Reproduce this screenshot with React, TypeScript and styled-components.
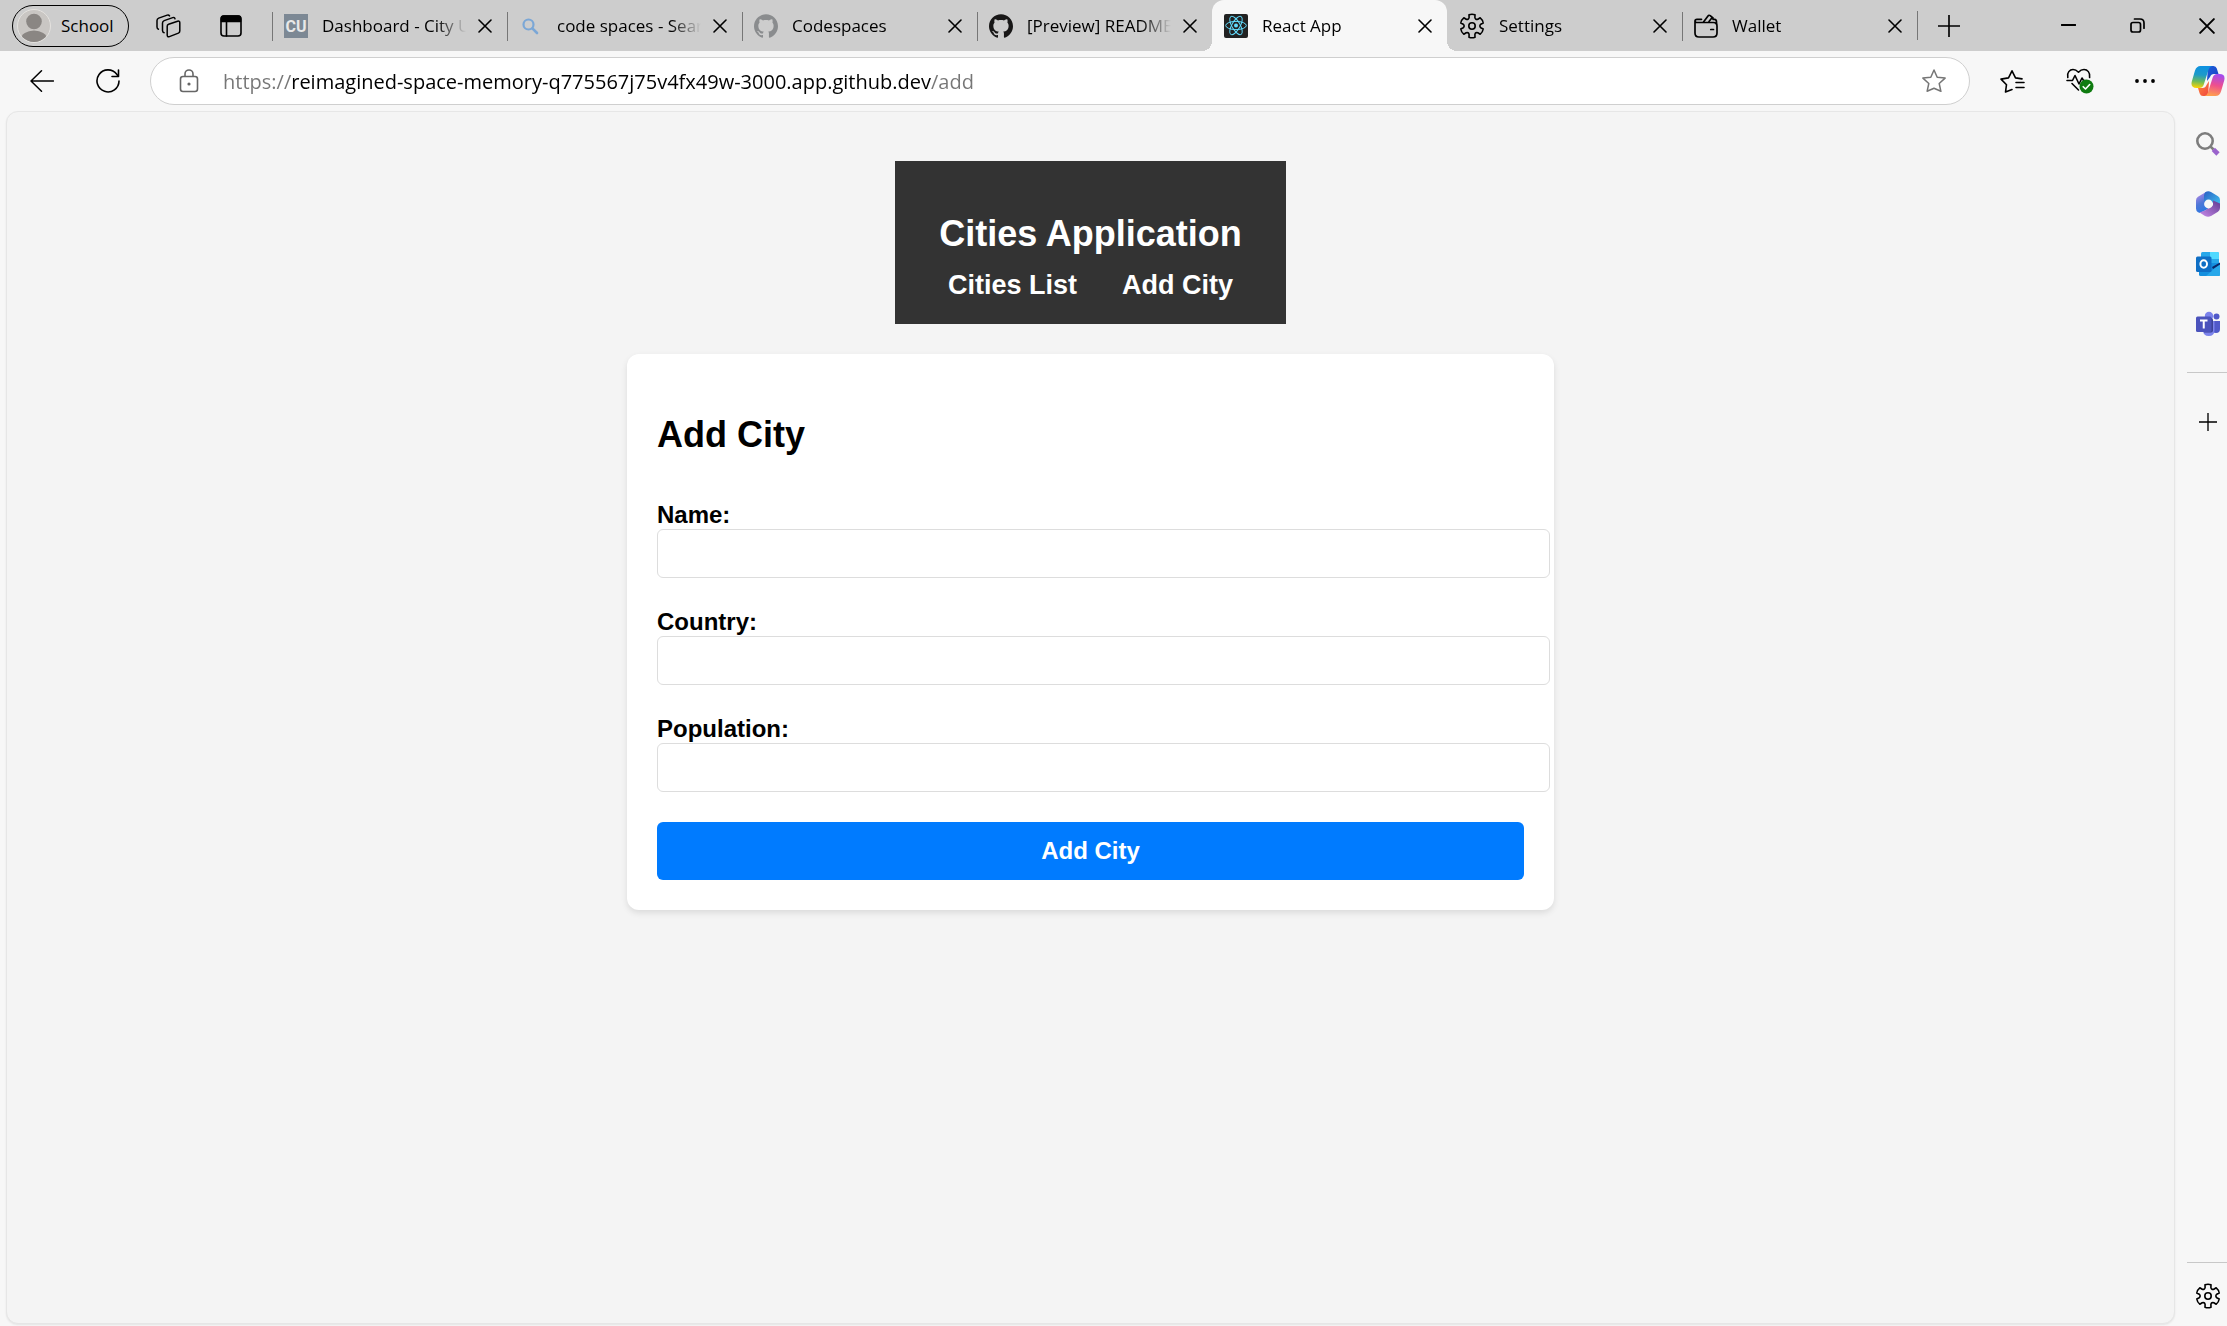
import React from "react";
import styled, { createGlobalStyle, css } from "styled-components";
import { SiGithub } from "react-icons/si";

const UI_FONT = `"Segoe UI", "Open Sans", "Noto Sans", sans-serif`;
const PAGE_FONT = `Arial, "Liberation Sans", sans-serif`;

const GlobalStyle = createGlobalStyle`
  *, *::before, *::after { box-sizing: border-box; }
  body { margin: 0; background: #f7f7f7; }
  button { font: inherit; color: inherit; background: none; border: 0; padding: 0; cursor: pointer; }
  svg { display: block; flex: none; }
`;

/* ---------- browser frame ---------- */

const Window = styled.div`
  display: flex;
  flex-direction: column;
  min-height: 100vh;
  color: #000;
  font-family: ${UI_FONT};
`;

const TabBar = styled.header`
  display: flex;
  align-items: center;
  height: 51px;
  padding-left: 12px;
  background: #cdcdcd;
  font-size: 17px;
`;

const ProfileButton = styled.button`
  display: flex;
  align-items: center;
  gap: 10px;
  width: 117px;
  height: 42px;
  padding-left: 4px;
  border: 1px solid #000;
  border-radius: 21px;
`;

const BarTools = styled.div`
  display: flex;
  align-items: center;
  gap: 39px;
  flex: none;
  width: 143px;
  padding-left: 27px;
`;

const IconButton = styled.button`
  display: flex;
  align-items: center;
  justify-content: center;
  flex: none;
`;

const TabList = styled.nav`
  display: flex;
  flex: 0 1 1645px;
  min-width: 0;
  height: 51px;
`;

const TabItem = styled.div<{ $active?: boolean; $divider?: boolean }>`
  position: relative;
  display: flex;
  align-items: center;
  flex: 1 1 0;
  min-width: 0;
  padding: 0 15px 0 12px;

  ${(p) =>
    p.$divider &&
    css`
      &::before {
        content: "";
        position: absolute;
        left: 0;
        top: 12px;
        width: 1px;
        height: 29px;
        background: #767676;
      }
    `}

  ${(p) =>
    p.$active &&
    css`
      background: #f7f7f7;
      border-radius: 12px 12px 0 0;
      &::before,
      &::after {
        content: "";
        position: absolute;
        bottom: 0;
        width: 10px;
        height: 10px;
      }
      &::before {
        left: -10px;
        background: radial-gradient(circle at 0 0, #cdcdcd 10px, #f7f7f7 10px);
      }
      &::after {
        right: -10px;
        background: radial-gradient(circle at 100% 0, #cdcdcd 10px, #f7f7f7 10px);
      }
    `}
`;

const TabButton = styled.button`
  display: flex;
  align-items: center;
  gap: 14px;
  flex: 1;
  min-width: 0;
  text-align: left;
`;

const TabTitle = styled.span`
  flex: 1;
  min-width: 0;
  overflow: hidden;
  white-space: nowrap;
  line-height: 26px;
  mask-image: linear-gradient(to right, #000 calc(100% - 30px), transparent);
`;

const TabClose = styled(IconButton)`
  margin-left: 12px;
`;

const TabBarDivider = styled.span`
  width: 1px;
  height: 29px;
  background: #767676;
`;

const NewTabButton = styled(IconButton)`
  margin-left: 20px;
`;

const WindowControls = styled.div`
  display: flex;
  justify-content: flex-end;
  gap: 54px;
  flex: 1;
  padding-right: 12px;
`;

const Toolbar = styled.div`
  display: flex;
  align-items: center;
  height: 60px;
  padding: 0 2px 0 30px;
`;

const NavButtons = styled.div`
  display: flex;
  gap: 42px;
  flex: none;
  width: 120px;
`;

const AddressBar = styled.div`
  display: flex;
  align-items: center;
  flex: 1;
  min-width: 0;
  height: 48px;
  padding: 0 23px 0 26px;
  background: #fff;
  border: 1px solid #cfcfcf;
  border-radius: 24px;
`;

const AddressLabel = styled.label`
  display: flex;
  align-items: center;
  gap: 22px;
  flex: 1;
  min-width: 0;
`;

/* Scheme and path are dimmed, the host keeps the full text colour. */
const AddressInput = styled.input`
  flex: 1;
  min-width: 0;
  height: 32px;
  padding: 1px 0 0;
  border: 0;
  outline: 0;
  font-family: ${UI_FONT};
  font-size: 20px;
  line-height: 30px;
  color: transparent;
  background: linear-gradient(to right, #767676 68px, #000 68px, #000 708px, #767676 708px);
  background-clip: text;
  -webkit-background-clip: text;
`;

const ToolbarActions = styled.div`
  display: flex;
  align-items: center;
  justify-content: space-between;
  flex: none;
  width: 155px;
  margin: 0 36px 0 30px;
`;

const Main = styled.div`
  display: flex;
  flex: 1;
  gap: 12px;
  padding: 0 0 2px 6px;
`;

const Sidebar = styled.aside`
  display: flex;
  flex-direction: column;
  align-items: center;
  flex: none;
  width: 40px;
  padding: 19px 0 14px;
`;

const SideApps = styled.div`
  display: flex;
  flex-direction: column;
  align-items: center;
  gap: 32px;
  width: 40px;
  padding-bottom: 34px;
`;

const SideButton = styled(IconButton)`
  width: 30px;
  height: 28px;
  padding-left: 2px;
`;

const SideRule = styled.hr`
  width: 40px;
  margin: 0;
  border: 0;
  border-top: 1px solid #c8c8c8;
`;

const SideAdd = styled(SideButton)`
  margin-top: 35px;
`;

const SideFooter = styled.div`
  display: flex;
  flex-direction: column;
  align-items: center;
  gap: 19px;
  margin-top: auto;
`;

/* ---------- web page ---------- */

const Page = styled.main`
  display: flex;
  flex-direction: column;
  align-items: center;
  gap: 30px;
  flex: 1;
  min-width: 0;
  padding: 49px 20px 30px;
  background: #f4f4f4;
  border: 1px solid #e6e6e6;
  border-radius: 12px;
  box-shadow: 0 1px 2px rgba(0, 0, 0, 0.08);
  font-family: ${PAGE_FONT};
  font-weight: bold;
`;

const SiteHeader = styled.header`
  padding: 52px 44px 23px;
  background: #333;
  color: #fff;
  text-align: center;
`;

const SiteTitle = styled.h1`
  margin: 0 0 15px;
  font-size: 36px;
  line-height: 42px;
`;

const SiteNav = styled.nav`
  display: flex;
  justify-content: center;
  gap: 45px;
`;

const SiteLink = styled.a`
  color: #fff;
  font-size: 27px;
  line-height: 31px;
  text-decoration: none;
`;

const CityForm = styled.form`
  width: 100%;
  max-width: 927px;
  padding: 60px 30px 30px;
  background: #fff;
  border-radius: 12px;
  box-shadow: 0 3px 6px rgba(0, 0, 0, 0.1);
`;

const FormTitle = styled.h2`
  margin: 0 0 45px;
  font-size: 36px;
  line-height: 42px;
`;

const Field = styled.div`
  margin-bottom: 30px;
`;

const FieldLabel = styled.label`
  display: block;
  font-size: 24px;
  line-height: 28px;
`;

const FieldInput = styled.input`
  display: block;
  width: calc(100% + 26px);
  height: 49px;
  padding: 0 12px;
  border: 1px solid #ddd;
  border-radius: 6px;
  font-family: ${PAGE_FONT};
  font-size: 20px;
  background: #fff;
`;

const SubmitButton = styled.button`
  && {
    display: block;
    width: 100%;
    height: 58px;
    border-radius: 6px;
    background: #007bff;
    color: #fff;
    font-size: 24px;
    line-height: 28px;
  }
`;

/* ---------- icons ---------- */

const line = {
  fill: "none",
  stroke: "currentColor",
  strokeLinecap: "round" as const,
  strokeLinejoin: "round" as const,
};

function polar(angle: number, radius: number) {
  const a = (angle * Math.PI) / 180;
  return `${(13 + radius * Math.cos(a)).toFixed(2)} ${(13 + radius * Math.sin(a)).toFixed(2)}`;
}

const gearPath =
  [0, 1, 2, 3, 4, 5]
    .map((i) => {
      const a = -90 + i * 60;
      return [
        `${i ? "L" : "M"}${polar(a - 19, 8.9)}`,
        `L${polar(a - 15, 11.6)}`,
        `Q${polar(a, 12.4)} ${polar(a + 15, 11.6)}`,
        `L${polar(a + 19, 8.9)}`,
        `Q${polar(a + 30, 7)} ${polar(a + 41, 8.9)}`,
      ].join("");
    })
    .join("") + "Z";

const Gear = () => (
  <svg width="26" height="26" viewBox="0 0 26 26" {...line} strokeWidth="1.6">
    <path d={gearPath} />
    <circle cx="13" cy="13" r="3.2" />
  </svg>
);

const Avatar = () => (
  <svg width="34" height="34" viewBox="0 0 34 34">
    <defs>
      <clipPath id="avatar">
        <circle cx="17" cy="17" r="16" />
      </clipPath>
    </defs>
    <circle cx="17" cy="17" r="16.5" fill="#c9c6c3" stroke="#e4e2df" />
    <g clipPath="url(#avatar)" fill="#8a8683">
      <circle cx="17" cy="12.5" r="7.8" />
      <ellipse cx="17" cy="30" rx="13" ry="8.6" />
    </g>
  </svg>
);

const Workspaces = () => (
  <svg width="25" height="24" viewBox="0 0 25 24" {...line} strokeWidth="1.5">
    <path d="M11.2 12.2q0-1.5 1.4-2l9-3q2.2-.5 2.2 1.6v8.2q0 1.5-1.4 2.1l-9 3.5q-2.2.7-2.2-1.5z" />
    <path d="M19 4.8q-.3-1.8-2.3-1.2l-8.5 3Q6.5 7.3 6.5 9v7.5q0 1.9 1.6 2.2" />
    <path d="M13.5 1.9q-.7-1.3-2.3-.8l-8.5 3Q1 4.8 1 6.5V13q0 1.6 1.4 2.2" />
  </svg>
);

const TabActions = () => (
  <svg width="22" height="22" viewBox="0 0 22 22" {...line} strokeWidth="1.6">
    <rect x="1" y="1" width="20" height="20" rx="3" />
    <path d="M1.5 3q0-2 2-2h15q2 0 2 2v3.5h-19z" fill="currentColor" />
    <path d="M6.5 7v14" />
  </svg>
);

const Cross = ({ size = 14, weight = 1.6 }: { size?: number; weight?: number }) => (
  <svg width={size} height={size} viewBox="0 0 14 14" {...line} strokeWidth={weight}>
    <path d="M1 1l12 12M13 1L1 13" />
  </svg>
);

const Plus = ({ size }: { size: number }) => (
  <svg width={size} height={size} viewBox="0 0 20 20" {...line} strokeWidth="1.5">
    <path d="M10 0v20M0 10h20" />
  </svg>
);

const Minimise = () => (
  <svg width="15" height="15" viewBox="0 0 15 15" {...line} strokeWidth="1.8">
    <path d="M.5 7h14" />
  </svg>
);

const Restore = () => (
  <svg width="15" height="15" viewBox="0 0 15 15" {...line} strokeWidth="1.7">
    <rect x="1" y="4.5" width="9.5" height="9.5" rx="2" />
    <path d="M4.5 1H10q4 0 4 4v5.2" />
  </svg>
);

const CuFavicon = () => (
  <svg width="24" height="24" viewBox="0 0 24 24">
    <rect width="24" height="24" fill="#7c8894" />
    <text x="12" y="18" textAnchor="middle" fill="#e8e8e8" fontFamily="Roboto, sans-serif" fontWeight="700" fontSize="16">
      CU
    </text>
  </svg>
);

const SearchFavicon = () => (
  <svg width="24" height="24" viewBox="0 0 24 24" fill="none" stroke="#7ba7d6" strokeWidth="2.2" strokeLinecap="round">
    <circle cx="9.5" cy="10.5" r="5" />
    <path d="M13.4 14.4l4.6 4.6" strokeWidth="2.6" />
  </svg>
);

const ReactFavicon = () => (
  <svg width="24" height="24" viewBox="0 0 24 24">
    <rect width="24" height="24" rx="2" fill="#222" />
    <g fill="none" stroke="#61dafb" strokeWidth="1">
      {[0, 60, 120].map((r) => (
        <ellipse key={r} cx="12" cy="11.5" rx="10.3" ry="4.1" transform={`rotate(${r} 12 11.5)`} />
      ))}
    </g>
    <circle cx="12" cy="11.5" r="2" fill="#61dafb" />
  </svg>
);

const Wallet = () => (
  <svg width="24" height="24" viewBox="0 0 24 24" {...line} strokeWidth="1.7">
    <path d="M7.5 5.3H3Q1 5.3 1 7v12q0 4 4 4h14q4 0 4-4v-7q0-3.5-3.5-3.5H3Q1 8.5 1 7" />
    <path d="M9.5 8L14 2q1-1.3 2.2-.3L19 4M15 7.5l3-3.7M19 5.3h1.5Q22.5 5.5 22.5 8v2" />
    <path d="M16.8 15.5h2.7" />
  </svg>
);

const Back = () => (
  <svg width="24" height="24" viewBox="0 0 24 24" {...line} strokeWidth="1.5">
    <path d="M23.5 12H1M11.5 1.7L1 12l10.5 10.3" />
  </svg>
);

const Refresh = () => (
  <svg width="24" height="24" viewBox="0 0 24 24" {...line} strokeWidth="1.6">
    <path d="M23 12A11 11 0 1 1 20.8 5.3L22 7" />
    <path d="M22.5 1v6.5H16" />
  </svg>
);

const Lock = () => (
  <svg width="24" height="24" viewBox="0 0 24 24" fill="none" stroke="#666" strokeWidth="1.6">
    <rect x="3.5" y="7.5" width="17" height="15" rx="2.5" />
    <path d="M8 7.5V5a4 4 0 0 1 8 0v2.5" />
    <circle cx="12" cy="15" r="1.6" fill="#666" stroke="none" />
  </svg>
);

const Star = () => (
  <svg width="24" height="24" viewBox="0 0 24 24" fill="none" stroke="#767676" strokeWidth="1.5" strokeLinejoin="round">
    <path d="M12 1l3.2 7.3 7.9.8-5.9 5.4 1.7 7.8L12 19.2l-6.9 3.1 1.7-7.8L.9 9.1l7.9-.8z" />
  </svg>
);

const Favourites = () => (
  <svg width="25" height="24" viewBox="0 0 25 24" {...line} strokeWidth="1.6">
    <path d="M12 20.5L5.5 23l1-7.3L1 10.1l7.5-1.2L12 1.8l3.5 7.1 6.5 1M16 13.5h8M16 18.5h8" />
  </svg>
);

const Essentials = () => (
  <svg width="28" height="26" viewBox="0 0 28 26" {...line} strokeWidth="1.6">
    <path d="M1.8 9.5C.5 4.5 4 1.5 7 1.5c2.3 0 3.8 1 5.5 2.7C14 2.5 15.7 1.5 18 1.5c3.3 0 6.5 3 5.6 8" />
    <path d="M1 12.5h5.5l2.5-5 4 8.5 3-6 1.5 2.5H19M6 15.5l6.5 6.5" />
    <circle cx="20.5" cy="18.5" r="7" fill="#0f7b10" stroke="none" />
    <path d="M17.2 18.7l2.3 2.3 4.2-4.5" stroke="#fff" />
  </svg>
);

const More = () => (
  <svg width="20" height="6" viewBox="0 0 20 6" fill="currentColor">
    <circle cx="2" cy="3" r="1.9" />
    <circle cx="10" cy="3" r="1.9" />
    <circle cx="18" cy="3" r="1.9" />
  </svg>
);

const Copilot = () => (
  <svg width="34" height="32" viewBox="0 0 34 32">
    <defs>
      <linearGradient id="cpA" x1="0.4" y1="0" x2="0.3" y2="1">
        <stop offset="0" stopColor="#0d91e1" />
        <stop offset="0.4" stopColor="#1d9bc8" />
        <stop offset="0.7" stopColor="#6cbb5c" />
        <stop offset="1" stopColor="#ffd400" />
      </linearGradient>
      <linearGradient id="cpB" x1="0.6" y1="0" x2="0.4" y2="1">
        <stop offset="0" stopColor="#a24bf0" />
        <stop offset="0.5" stopColor="#ee4f8e" />
        <stop offset="1" stopColor="#ffa04d" />
      </linearGradient>
      <linearGradient id="cpC" x1="0" y1="0" x2="1" y2="1">
        <stop offset="0" stopColor="#1b5fd9" />
        <stop offset="1" stopColor="#1a3fc4" />
      </linearGradient>
      <linearGradient id="cpD" x1="0" y1="0" x2="1" y2="1">
        <stop offset="0" stopColor="#ff8a3c" />
        <stop offset="1" stopColor="#f0443e" />
      </linearGradient>
    </defs>
    <path d="M17 1h5.5q2.5 0 3.3 2.5L27.5 9H23q-3 0-4 3l-3 4z" fill="url(#cpC)" />
    <path d="M17 31h-5q-2.5 0-3.3-2.5L7 23h4.5q3 0 4-3l2.5-4z" fill="url(#cpD)" />
    <path d="M9.5 1H21q-2.5.6-3.4 3.5l-4.8 15Q11.7 23 8 23H5.5Q-.8 23 .8 16.5L4 5.5Q5.5 1 9.5 1z" fill="url(#cpA)" />
    <path d="M24.5 31H13.5q2.5-.6 3.4-3.5l4.8-15Q22.8 9 26 9h2.5q6.3 0 4.7 6.5L30 26.5Q28.5 31 24.5 31z" fill="url(#cpB)" />
  </svg>
);

const SideSearch = () => (
  <svg width="26" height="26" viewBox="0 0 26 26" fill="none">
    <circle cx="10" cy="10" r="7.7" stroke="#7d7d7d" strokeWidth="2.6" />
    <path d="M15.5 15.5l3 3" stroke="#7d7d7d" strokeWidth="2.5" />
    <path d="M18.3 18.3l4.7 4.7" stroke="#9a63cc" strokeWidth="4.6" />
  </svg>
);

const Microsoft365 = () => (
  <svg width="26" height="28" viewBox="0 0 26 28">
    <defs>
      <linearGradient id="msA" x1="0" y1="0" x2="0.3" y2="1">
        <stop offset="0" stopColor="#c58be8" />
        <stop offset="0.6" stopColor="#4f77d8" />
        <stop offset="1" stopColor="#2f78e0" />
      </linearGradient>
      <linearGradient id="msB" x1="0" y1="0" x2="1" y2="1">
        <stop offset="0" stopColor="#2a5fc4" />
        <stop offset="1" stopColor="#41c8f2" />
      </linearGradient>
      <linearGradient id="msC" x1="0" y1="1" x2="1" y2="0">
        <stop offset="0" stopColor="#c98bea" />
        <stop offset="1" stopColor="#5f3a91" />
      </linearGradient>
    </defs>
    <path d="M11 1.9L3 6.8Q1 8 1 10.5v8q0 2.5 2 3.7l2 .9 8-4V6z" fill="url(#msA)" />
    <path d="M10 2.5Q13 .3 16 2l7 4.2q2 1.3 2 3.8v7l-7-4-9-2V5z" fill="url(#msB)" />
    <path d="M25 13.5V18q0 2.5-2 3.7L16 26q-3 1.5-6 0l-5.500-3.500L10 20.500 18 15l0-4.500z" fill="url(#msC)" />
    <circle cx="13.5" cy="14" r="4.4" fill="#f7f7f7" />
  </svg>
);

const Outlook = () => (
  <svg width="26" height="26" viewBox="0 0 26 26">
    <rect x="6" y="1" width="18" height="14" rx="1.5" fill="#28a8ea" />
    <path d="M15 1h7.5Q24 1 24 2.5V8h-9z" fill="#50d9ff" />
    <path d="M4 12h21v11.5q0 1.5-1.5 1.5h-18Q4 25 4 23.5z" fill="#1490df" />
    <path d="M25 12.5L11 25h12.5q1.5 0 1.5-1.5z" fill="#28a8ea" />
    <path d="M17 16l8-4.5v2L18 18z" fill="#0a2767" />
    <rect x="1" y="5.5" width="15.5" height="15.5" rx="1.5" fill="#0f6fc5" />
    <ellipse cx="8.7" cy="13" rx="3.3" ry="3.8" fill="none" stroke="#fff" strokeWidth="2" />
  </svg>
);

const Teams = () => (
  <svg width="26" height="26" viewBox="0 0 26 26">
    <circle cx="21.5" cy="5.5" r="3" fill="#5059c9" />
    <path d="M17 10h8v8q0 4-4 4t-4-4z" fill="#5059c9" />
    <circle cx="14" cy="5" r="4.2" fill="#7b83eb" />
    <path d="M8 10h11.5v9q0 6-5.7 6T8 19z" fill="#7b83eb" />
    <path d="M9 7h7q2 0 2 2v10.5q0 2-2 2H9z" fill="#3b4296" />
    <rect x="1" y="5.5" width="15.5" height="15.5" rx="1.5" fill="#4b53bc" />
    <path d="M5 9.5h7.5M8.75 9.5v8" stroke="#fff" strokeWidth="2" />
  </svg>
);

/* ---------- content ---------- */

const tabs = [
  { title: "Dashboard - City University", icon: <CuFavicon />, divider: true },
  { title: "code spaces - Search", icon: <SearchFavicon />, divider: true },
  { title: "Codespaces", icon: <SiGithub size={24} color="#8a8c8e" />, divider: true },
  { title: "[Preview] README.md", icon: <SiGithub size={24} color="#181717" />, divider: true },
  { title: "React App", icon: <ReactFavicon />, active: true },
  { title: "Settings", icon: <Gear /> },
  { title: "Wallet", icon: <Wallet />, divider: true },
];

const fields = [
  { id: "name", label: "Name:", type: "text" },
  { id: "country", label: "Country:", type: "text" },
  { id: "population", label: "Population:", type: "number" },
];

export default function App() {
  return (
    <>
      <GlobalStyle />
      <Window>
        <TabBar>
          <ProfileButton>
            <Avatar />
            School
          </ProfileButton>
          <BarTools>
            <IconButton aria-label="Workspaces"><Workspaces /></IconButton>
            <IconButton aria-label="Tab actions"><TabActions /></IconButton>
          </BarTools>
          <TabList>
            {tabs.map((tab) => (
              <TabItem key={tab.title} $active={tab.active} $divider={tab.divider}>
                <TabButton>
                  {tab.icon}
                  <TabTitle>{tab.title}</TabTitle>
                </TabButton>
                <TabClose aria-label="Close tab"><Cross /></TabClose>
              </TabItem>
            ))}
          </TabList>
          <TabBarDivider />
          <NewTabButton aria-label="New tab"><Plus size={22} /></NewTabButton>
          <WindowControls>
            <IconButton aria-label="Minimise"><Minimise /></IconButton>
            <IconButton aria-label="Restore"><Restore /></IconButton>
            <IconButton aria-label="Close"><Cross size={16} weight={1.7} /></IconButton>
          </WindowControls>
        </TabBar>

        <Toolbar>
          <NavButtons>
            <IconButton aria-label="Back"><Back /></IconButton>
            <IconButton aria-label="Refresh"><Refresh /></IconButton>
          </NavButtons>
          <AddressBar>
            <AddressLabel>
              <Lock />
              <AddressInput
                aria-label="Address"
                spellCheck={false}
                defaultValue="https://reimagined-space-memory-q775567j75v4fx49w-3000.app.github.dev/add"
              />
            </AddressLabel>
            <IconButton aria-label="Add to favourites"><Star /></IconButton>
          </AddressBar>
          <ToolbarActions>
            <IconButton aria-label="Favourites"><Favourites /></IconButton>
            <IconButton aria-label="Browser essentials"><Essentials /></IconButton>
            <IconButton aria-label="More"><More /></IconButton>
          </ToolbarActions>
          <IconButton aria-label="Copilot"><Copilot /></IconButton>
        </Toolbar>

        <Main>
          <Page>
            <SiteHeader>
              <SiteTitle>Cities Application</SiteTitle>
              <SiteNav>
                <SiteLink href="#list">Cities List</SiteLink>
                <SiteLink href="#add">Add City</SiteLink>
              </SiteNav>
            </SiteHeader>
            <CityForm onSubmit={(e) => e.preventDefault()}>
              <FormTitle>Add City</FormTitle>
              {fields.map((field) => (
                <Field key={field.id}>
                  <FieldLabel htmlFor={field.id}>{field.label}</FieldLabel>
                  <FieldInput id={field.id} name={field.id} type={field.type} />
                </Field>
              ))}
              <SubmitButton type="submit">Add City</SubmitButton>
            </CityForm>
          </Page>
          <Sidebar>
            <SideApps>
              <SideButton aria-label="Search"><SideSearch /></SideButton>
              <SideButton aria-label="Microsoft 365"><Microsoft365 /></SideButton>
              <SideButton aria-label="Outlook"><Outlook /></SideButton>
              <SideButton aria-label="Teams"><Teams /></SideButton>
            </SideApps>
            <SideRule />
            <SideAdd aria-label="Customize"><Plus size={18} /></SideAdd>
            <SideFooter>
              <SideRule />
              <SideButton aria-label="Settings"><Gear /></SideButton>
            </SideFooter>
          </Sidebar>
        </Main>
      </Window>
    </>
  );
}
